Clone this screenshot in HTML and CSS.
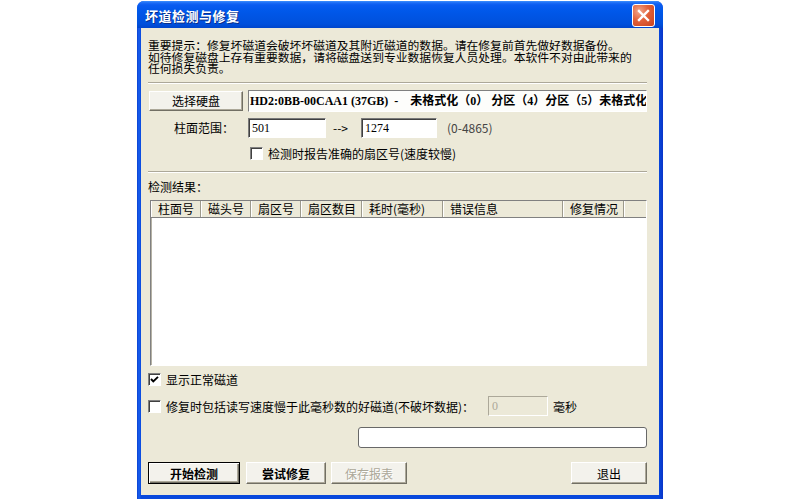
FILE: index.html
```html
<!DOCTYPE html>
<html lang="zh">
<head>
<meta charset="utf-8">
<title>坏道检测与修复</title>
<link rel="stylesheet" href="styles.css">
</head>
<body>
<div class="window">
  <div class="titlebar">
    <span class="title">坏道检测与修复</span>
    <span class="close"><svg width="21" height="21" viewBox="0 0 21 21"><path d="M6 6 L15 15 M15 6 L6 15" stroke="#fff" stroke-width="2.4" stroke-linecap="square"/></svg></span>
  </div>
  <div class="client">
    <div class="notice">
      <div class="nline">重要提示：修复坏磁道会破坏坏磁道及其附近磁道的数据。请在修复前首先做好数据备份。</div>
      <div class="nline">如待修复磁盘上存有重要数据，请将磁盘送到专业数据恢复人员处理。本软件不对由此带来的</div>
      <div class="nline">任何损失负责。</div>
    </div>
    <div class="sep"></div>
    <div class="row row-disk">
      <button class="btn btn-select">选择硬盘</button>
      <div class="diskinfo">HD2:0BB-00CAA1 (37GB)  -    未格式化（0） 分区（4）分区（5）未格式化（0）</div>
    </div>
    <div class="row row-cyl">
      <span class="lbl-cyl">柱面范围：</span>
      <span class="field field-from">501</span>
      <span class="arrow">--&gt;</span>
      <span class="field field-to">1274</span>
      <span class="range">(0-4865)</span>
    </div>
    <div class="row row-exact">
      <span class="chk"></span>
      <span class="chk-label">检测时报告准确的扇区号(速度较慢)</span>
    </div>
    <div class="sep sep2"></div>
    <div class="result-label">检测结果：</div>
    <div class="list">
      <div class="list-head">
        <span class="hcell w50">柱面号</span>
        <span class="hcell w50">磁头号</span>
        <span class="hcell w50">扇区号</span>
        <span class="hcell w61">扇区数目</span>
        <span class="hcell w81">耗时(毫秒)</span>
        <span class="hcell w120">错误信息</span>
        <span class="hcell w61">修复情况</span>
        <span class="hcell hfill"></span>
      </div>
    </div>
    <div class="row row-normal">
      <span class="chk checked"><svg width="11" height="11" viewBox="0 0 11 11"><polyline points="2,5 4.3,7.5 9,2.8" fill="none" stroke="#000" stroke-width="1.9"/></svg></span>
      <span class="chk-label">显示正常磁道</span>
    </div>
    <div class="row row-slow">
      <span class="chk"></span>
      <span class="chk-label slow-label">修复时包括读写速度慢于此毫秒数的好磁道(不破坏数据)：</span>
      <span class="field field-disabled">0</span>
      <span class="unit">毫秒</span>
    </div>
    <div class="progress"></div>
    <div class="row row-buttons">
      <button class="btn btn-default bold w92">开始检测</button>
      <button class="btn bold w80 gap6">尝试修复</button>
      <button class="btn w76 gap5 disabled">保存报表</button>
      <button class="btn w76 push">退出</button>
    </div>
  </div>
</div>
</body>
</html>
```
FILE: styles.css
```css
html, body {
  margin: 0;
  padding: 0;
  background: #ffffff;
}
body {
  font-family: "Noto Sans CJK SC", "Noto Sans", sans-serif;
  font-size: 12px;
  color: #000;
  width: 797px;
  height: 500px;
  overflow: hidden;
}
.window {
  margin: 1px 0 0 137px;
  width: 526px;
  height: 498px;
  display: flex;
  flex-direction: column;
  background: linear-gradient(to right, #0a3fd0 0, #1860f0 2px, #0848dc 4px, #0848dc calc(100% - 4px), #0a35c8 100%);
  border-radius: 7px 7px 0 0;
  box-sizing: border-box;
}
.titlebar {
  height: 27px;
  display: flex;
  align-items: center;
  padding: 1px 8px 0 8px;
  box-sizing: border-box;
  border-radius: 7px 7px 0 0;
  background: linear-gradient(#3d8ffd 0, #1a6af5 2px, #0a5cf0 4px, #0058ea 10px, #0054e3 60%, #0050dc 85%, #0046cc 100%);
}
.title {
  flex: 1;
  color: #fff;
  font-weight: bold;
  font-size: 13px;
  line-height: 15px;
  letter-spacing: 0.5px;
  text-shadow: 1px 1px 0 #0c2f8a;
}
.close {
  width: 21px;
  height: 21px;
  border: 1px solid #fff;
  border-radius: 3px;
  display: flex;
  align-items: center;
  justify-content: center;
  background: radial-gradient(circle at 30% 30%, #f0a88e 0, #e2613a 45%, #c8421c 100%);
}
.client {
  flex: 1;
  margin: 0 4px 4px 4px;
  background: #ece9d8;
  padding: 0 12px 0 7px;
  display: flex;
  flex-direction: column;
}
.notice {
  margin-top: 11px;
  white-space: nowrap;
}
.nline {
  height: 11.5px;
  line-height: 11.5px;
  font-size: 11.8px;
  overflow: visible;
}
.sep {
  margin-top: 8px;
  height: 0;
  border-top: 1px solid #aca899;
  border-bottom: 1px solid #ffffff;
}
.sep2 {
  margin-top: 11px;
}
.row {
  display: flex;
  align-items: center;
}
.btn {
  height: 22px;
  box-sizing: border-box;
  padding: 0;
  font-family: "Noto Sans CJK SC", sans-serif;
  font-size: 12px;
  color: #000;
  background: #f3f2ec;
  border: 1px solid;
  border-color: #ffffff #716f64 #716f64 #ffffff;
  box-shadow: inset -1px -1px 0 #aca899;
  display: flex;
  align-items: center;
  justify-content: center;
}
.row-disk {
  margin-top: 6px;
  height: 22px;
}
.btn-select {
  width: 94px;
  height: 20px;
  margin-left: 1px;
}
.diskinfo {
  margin-left: 5px;
  flex: 1;
  height: 22px;
  box-sizing: border-box;
  border: 1px solid;
  border-color: #808080 #ffffff #ffffff #808080;
  background: #fdfdfb;
  font-family: "Liberation Serif", "Noto Sans CJK SC", serif;
  font-weight: bold;
  font-size: 12px;
  line-height: 20px;
  padding-left: 1px;
  white-space: pre;
  overflow: hidden;
}
.row-cyl {
  margin-top: 6px;
  height: 20px;
}
.lbl-cyl {
  width: 85px;
  margin-left: 1px;
  text-align: right;
}
.field {
  height: 20px;
  box-sizing: border-box;
  border: 1px solid;
  border-color: #7a7a7a #ffffff #ffffff #7a7a7a;
  box-shadow: inset 1px 1px 0 #404040;
  background: #fff;
  font-family: "Liberation Serif", serif;
  font-size: 12px;
  line-height: 18px;
  padding-left: 3px;
}
.field-from {
  margin-left: 14px;
  width: 78px;
}
.arrow {
  margin-left: 7px;
  width: 28px;
}
.field-to {
  width: 76px;
}
.range {
  margin-left: 10px;
  color: #444;
  font-size: 12px;
}
.row-exact {
  margin-top: 9px;
  height: 13px;
}
.row-exact .chk {
  margin-left: 102px;
}
.chk {
  width: 13px;
  height: 13px;
  box-sizing: border-box;
  border: 1px solid;
  border-color: #808080 #ffffff #ffffff #808080;
  box-shadow: inset 1px 1px 0 #404040;
  background: #fff;
  display: flex;
  align-items: center;
  justify-content: center;
  flex: none;
}
.chk-label {
  margin-left: 5px;
  white-space: nowrap;
}
.result-label {
  margin-top: 8px;
  line-height: 12px;
}
.list {
  margin-top: 7.5px;
  margin-left: 2px;
  height: 166px;
  box-sizing: border-box;
  border: 1px solid;
  border-color: #808080 #ffffff #ffffff #808080;
  box-shadow: inset 1px 1px 0 #b5b2a5;
  background: #ffffff;
}
.list-head {
  display: flex;
  height: 17px;
  box-sizing: border-box;
  background: #ece9d8;
  border-bottom: 1px solid #808080;
}
.hcell {
  box-sizing: border-box;
  height: 16px;
  line-height: 16px;
  padding-left: 6px;
  border-left: 1px solid #ffffff;
  border-right: 1px solid #9d9a8c;
  white-space: nowrap;
  overflow: hidden;
}
.w50 { width: 50px; }
.w61 { width: 61px; }
.w81 { width: 81px; }
.w120 { width: 120px; }
.hfill { flex: 1; border-right: none; }
.row-normal {
  margin-top: 7px;
  height: 13px;
}
.row-slow {
  margin-top: 10px;
  height: 20px;
}
.slow-label {
  width: 322px;
}
.field-disabled {
  width: 60px;
  background: #ece9d8;
  border-color: #aca899 #ffffff #ffffff #aca899;
  box-shadow: none;
  color: #aca899;
  padding-left: 3px;
}
.unit {
  margin-left: 5px;
}
.progress {
  margin-top: 11px;
  margin-left: auto;
  width: 289px;
  height: 21px;
  box-sizing: border-box;
  border: 1px solid #686868;
  border-radius: 3px;
  background: #ffffff;
}
.row-buttons {
  margin-top: 14px;
  height: 22px;
}
.btn-default {
  border: 1px solid #000;
  box-shadow: inset 1px 1px 0 #ffffff, inset -1px -1px 0 #716f64, inset -2px -2px 0 #aca899;
}
.bold { font-weight: bold; }
.w92 { width: 92px; }
.w80 { width: 80px; }
.w76 { width: 76px; }
.gap6 { margin-left: 6px; }
.gap5 { margin-left: 5px; }
.push { margin-left: auto; }
.disabled {
  color: #aca899;
  text-shadow: 1px 1px 0 #ffffff;
}
```
